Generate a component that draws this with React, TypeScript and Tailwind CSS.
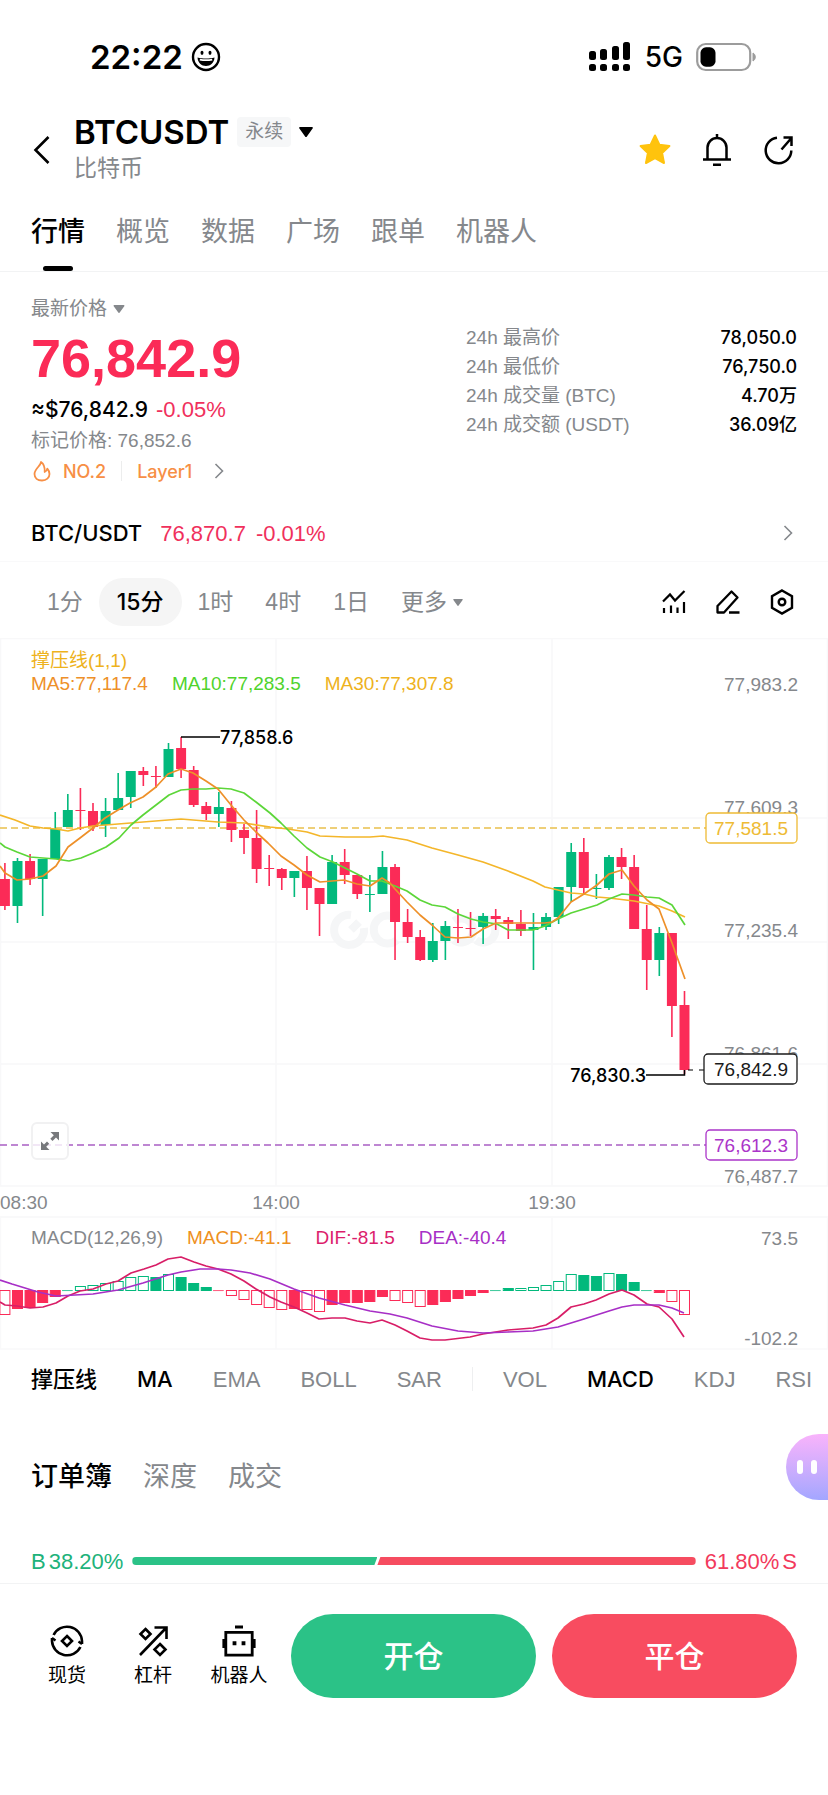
import React, { useState } from 'react';

const UP = '#02b97c';
const DOWN = '#fb2b57';
const PITCH = 12.585;
const FIRST_X = 4.9;

// [rising, high, body top, body bottom, low]
const candles: number[][] = [
  [0, 225, 241, 268, 272], [1, 220, 223, 268, 285], [0, 216, 223, 241, 247], [1, 221, 221, 241, 278],
  [1, 174, 191, 221, 221], [1, 156, 172, 189, 189], [0, 150, 172, 173, 192], [0, 165, 173, 189, 193],
  [1, 160, 173, 187, 199], [1, 135, 160, 172, 172], [1, 133, 133, 159, 170], [0, 129, 133, 137, 148],
  [0, 128, 138, 139, 150], [1, 105, 111, 139, 139], [0, 99, 110, 131, 140], [0, 128, 132, 167, 169],
  [0, 164, 168, 176, 182], [1, 154, 169, 176, 189], [0, 163, 170, 192, 204], [0, 186, 192, 200, 216],
  [0, 172, 200, 231, 245], [0, 217, 230, 231, 248], [0, 230, 231, 240, 252], [1, 233, 233, 240, 259],
  [0, 218, 233, 250, 272], [0, 250, 250, 266, 298], [1, 217, 224, 266, 266], [0, 211, 224, 237, 246],
  [0, 237, 237, 256, 261], [1, 237, 256, 257, 274], [1, 213, 229, 256, 256], [0, 226, 229, 284, 322],
  [0, 271, 284, 299, 305], [0, 292, 299, 322, 323], [1, 285, 303, 322, 324], [1, 283, 288, 303, 322],
  [0, 271, 289, 290, 305], [0, 274, 290, 291, 298], [1, 275, 278, 289, 306], [0, 271, 278, 281, 292],
  [0, 279, 282, 286, 301], [0, 272, 286, 293, 298], [1, 275, 289, 292, 332], [1, 275, 279, 289, 292],
  [1, 249, 249, 279, 286], [1, 205, 214, 249, 264], [0, 200, 214, 250, 257], [1, 236, 250, 251, 261],
  [1, 217, 219, 250, 252], [0, 210, 219, 229, 241], [0, 217, 229, 291, 291], [0, 267, 291, 322, 352],
  [1, 289, 295, 322, 338], [0, 295, 295, 368, 399], [0, 353, 367, 432, 436],
];

const ma5 =
  '0,228 5,235 17,242 30,241 43,238 56,228 68,209 80,200 93,190 105,180 118,172 130,165 143,159 156,149 168,136 181,131 193,135 206,143 218,151 231,167 244,182 256,194 268,205 281,218 294,227 307,237 320,244 344,242 357,246 370,248 382,240 390,245 395,251 407,264 420,277 432,287 445,299 458,300 471,299 483,291 496,285 545,285 552,284 558,280 571,264 584,256 597,247 609,236 622,232 634,248 647,262 659,271 672,305 685,341';
const ma10 =
  '0,205 5,209 17,214 30,219 43,220 56,221 69,223 81,220 93,215 106,209 119,200 131,187 143,177 156,167 169,157 181,152 193,151 206,151 218,150 231,151 244,155 256,164 270,175 281,185 294,198 307,210 320,219 333,224 357,236 370,243 382,243 395,248 407,253 420,262 432,267 445,269 458,276 471,281 483,284 497,286 508,292 533,292 545,288 558,281 571,275 584,271 597,267 609,261 622,256 634,257 647,259 659,260 672,267 685,287';
const ma30 =
  '0,177 15,182 30,188 43,190 56,191 68,193 80,190 93,188 118,186 143,184 168,182 181,181 193,182 218,184 244,185 270,189 288,191 307,194 320,198 345,199 370,199 383,198 407,202 432,210 458,217 483,224 508,233 533,243 545,249 558,252 571,255 584,256 597,259 609,260 634,263 659,268 672,273 685,279';

// [rising, filled, height]
const macdBars: number[][] = [
  [0, 0, 24], [0, 1, 18], [0, 1, 17], [0, 1, 12], [0, 1, 6], [1, 1, 0], [1, 0, 4], [1, 0, 5],
  [1, 0, 7], [1, 0, 9], [1, 0, 13], [1, 0, 14], [1, 1, 13], [1, 0, 16], [1, 1, 13], [1, 1, 7],
  [1, 1, 3], [0, 1, 0], [0, 0, 5], [0, 0, 9], [0, 0, 14], [0, 0, 17], [0, 0, 19], [0, 1, 18],
  [0, 0, 19], [0, 0, 21], [0, 1, 14], [0, 1, 12], [0, 1, 12], [0, 1, 11], [0, 1, 6], [0, 0, 10],
  [0, 0, 12], [0, 0, 16], [0, 1, 14], [0, 1, 11], [0, 1, 8], [0, 1, 5], [0, 1, 2], [1, 1, 0],
  [1, 1, 2], [1, 0, 2], [1, 0, 3], [1, 0, 5], [1, 0, 9], [1, 0, 16], [1, 1, 15], [1, 1, 14],
  [1, 0, 17], [1, 1, 16], [1, 1, 8], [1, 1, 0], [0, 1, 2], [0, 0, 11], [0, 0, 24],
];

const dif =
  '0,84 5,87 17,88 30,90 43,89 56,85 68,78 80,73 93,71 106,66 118,63 131,55 144,51 156,47 168,41 181,39 194,44 206,48 218,51 231,56 244,63 256,71 270,79 281,84 294,89 307,95 319,101 332,100 345,100 357,103 370,105 382,102 395,107 407,113 420,120 432,122 445,122 470,119 483,116 508,112 533,110 546,107 558,100 571,89 584,86 596,82 609,76 622,72 634,77 647,86 659,89 672,101 684,119';
const dea =
  '0,62 12,66 38,74 56,78 75,77 93,76 118,72 143,65 168,57 181,54 200,51 218,51 231,52 250,55 270,61 294,71 319,80 345,87 370,93 390,96 407,100 432,108 458,113 483,115 508,114 533,113 558,109 584,101 609,93 622,89 634,87 647,87 659,87 672,90 684,95';

const Caret = ({ className }: { className: string }) => (
  <svg viewBox="0 0 14 10" className={className} fill="currentColor">
    <path d="M1.2 0h11.6c.9 0 1.4.9.8 1.6L7.9 9.4a1.1 1.1 0 0 1-1.8 0L.4 1.6C-.2.9.3 0 1.2 0Z" />
  </svg>
);

const ChevronRight = () => (
  <svg viewBox="0 0 10 16" className="h-4 w-[10px] text-[#85888c]" fill="none" stroke="currentColor" strokeWidth="1.6">
    <path d="M1.5 1l7 7-7 7" />
  </svg>
);

const StatusBar = () => (
  <div className="flex h-[76px] items-center justify-between pt-[38px] pr-[72px] pl-[90px] font-['Inter',sans-serif]">
    <div className="flex items-center gap-2">
      <span className="text-[33px] leading-10 font-semibold">22:22</span>
      <svg viewBox="0 0 30 30" className="h-[30px] w-[30px]" fill="none" stroke="currentColor">
        <circle cx="15" cy="15" r="13" strokeWidth="2.4" />
        <ellipse cx="11" cy="10.8" rx="1.5" ry="2.1" fill="currentColor" stroke="none" />
        <ellipse cx="19" cy="10.8" rx="1.5" ry="2.1" fill="currentColor" stroke="none" />
        <path d="M6.5 15.5c5 1.3 12 1.3 17 0-.3 5.3-4 8.5-8.5 8.5s-8.2-3.2-8.5-8.5Z" fill="currentColor" stroke="none" />
        <path d="M8.8 17.6c4 .8 8.4.8 12.4 0" stroke="#fff" strokeWidth="1.7" />
      </svg>
    </div>
    <div className="flex items-center gap-[13px]">
      <svg viewBox="0 0 44 30" className="h-[30px] w-11" fill="currentColor">
        <rect x="1" y="9" width="7" height="9" rx="2.5" />
        <rect x="12" y="7" width="7" height="11" rx="2.5" />
        <rect x="24" y="4" width="7" height="14" rx="2.5" />
        <rect x="35" y="0" width="7" height="18" rx="2.5" />
        <rect x="1" y="22" width="7" height="7" rx="2.5" />
        <rect x="12" y="22" width="7" height="7" rx="2.5" />
        <rect x="24" y="22" width="7" height="7" rx="2.5" />
        <rect x="35" y="22" width="7" height="7" rx="2.5" />
      </svg>
      <span className="text-[28px] leading-10 font-medium">5G</span>
      <svg viewBox="0 0 60 30" className="h-[30px] w-[60px]">
        <rect x="1.2" y="2" width="53" height="26" rx="8.5" fill="none" stroke="#9c9c9c" strokeWidth="2.2" />
        <rect x="4.5" y="5.3" width="15" height="19.4" rx="5.5" />
        <path d="M57 11c3 1.5 3 6.5 0 8Z" fill="#9c9c9c" stroke="#9c9c9c" />
      </svg>
    </div>
  </div>
);

const Header = () => (
  <header className="flex items-center px-8 pt-9">
    <button aria-label="返回" className="flex w-[42px] pt-1">
      <svg viewBox="0 0 18 30" className="h-[30px] w-[18px]" fill="none" stroke="currentColor" strokeWidth="2.6">
        <path d="M16.5 2 3.5 15l13 13" />
      </svg>
    </button>
    <div className="flex-1">
      <div className="flex h-10 items-center">
        <h1 className="font-['Inter',sans-serif] text-[33px] leading-10 font-semibold">BTCUSDT</h1>
        <span className="ml-2 rounded-sm bg-[#f6f7f8] px-2 text-[19px] leading-[30px] text-[#85888c]">永续</span>
        <button aria-label="切换合约" className="ml-2">
          <Caret className="h-[10px] w-[14px]" />
        </button>
      </div>
      <p className="text-[23px] leading-8 text-[#85888c]">比特币</p>
    </div>
    <div className="flex items-center gap-7 pt-1">
      <button aria-label="收藏">
        <svg viewBox="0 0 34 34" className="h-[34px] w-[34px]" fill="#ffc30d" stroke="#ffc30d" strokeWidth="2" strokeLinejoin="round">
          <path d="M17 2.5l4.4 9.2 10 1.3-7.3 7 1.9 10L17 25.2 8 30l1.9-10-7.3-7 10-1.3Z" />
        </svg>
      </button>
      <button aria-label="提醒">
        <svg viewBox="0 0 34 34" className="h-[34px] w-[34px]" fill="none" stroke="currentColor" strokeWidth="2.5">
          <path d="M17 1v4M7.5 26.5V14.5a9.5 9.5 0 0 1 19 0v12M3 26.5h28M13 31.7h8" />
        </svg>
      </button>
      <button aria-label="分享">
        <svg viewBox="0 0 34 34" className="h-[34px] w-[34px]" fill="none" stroke="currentColor" strokeWidth="2.5">
          <path d="M15 4.7A12.8 12.8 0 1 0 29.3 17.5M19.5 16.5 29 5.5M21.5 4.5H29.5V13" />
        </svg>
      </button>
    </div>
  </header>
);

const pageTabs = ['行情', '概览', '数据', '广场', '跟单', '机器人'];

const PageTabs = () => {
  const [active, setActive] = useState('行情');
  return (
    <nav className="flex gap-[31px] border-b border-[#f2f3f4] px-[31px] pt-8">
      {pageTabs.map(tab => (
        <button
          key={tab}
          onClick={() => setActive(tab)}
          className={`flex flex-col items-center text-[27px] leading-8 ${active === tab ? 'font-medium text-black' : 'text-[#85888c]'}`}
        >
          {tab}
          <span className={`mt-[18px] h-[5px] w-[30px] rounded-sm ${active === tab ? 'bg-black' : ''}`} />
        </button>
      ))}
    </nav>
  );
};

const stats = [
  ['24h 最高价', '78,050.0'],
  ['24h 最低价', '76,750.0'],
  ['24h 成交量 (BTC)', '4.70万'],
  ['24h 成交额 (USDT)', '36.09亿'],
];

const Summary = () => (
  <section className="border-b border-[#f9f9fa] px-[31px] pt-[21px] pb-2">
    <div className="flex justify-between">
      <div>
        <button className="flex items-center gap-[6px] text-[19px] leading-8 text-[#85888c]">
          最新价格
          <Caret className="h-2 w-3" />
        </button>
        <p className="text-[54px] leading-[66px] font-bold text-[#fb2b57]">76,842.9</p>
        <p className="flex gap-2 text-[22px] leading-[38px] text-[#f0305c]">
          <span className="font-['Inter',sans-serif] text-[21px] font-medium text-black">≈$76,842.9</span>
          -0.05%
        </p>
        <p className="text-[19px] leading-6 text-[#85888c]">标记价格: 76,852.6</p>
        <a href="#rank" className="flex h-9 items-center font-['Inter',sans-serif] text-[18px] font-medium text-[#f78f45]">
          <svg viewBox="0 0 20 22" className="ml-px h-[22px] w-5" fill="none" stroke="currentColor" strokeWidth="1.8" strokeLinejoin="round">
            <path d="M9 2c.3 3.5-6.5 6.5-6.5 12 0 4 3 6.5 7.5 6.5s7.5-2.8 7.5-6.5c0-2-.8-3.8-2.2-5.3-.3 1.800-1.200 2.800-2.600 3.300C13 7.500 12 4 9 2Z" />
          </svg>
          <span className="ml-[11px]">NO.2</span>
          <span className="mx-[15px] h-5 w-px bg-[#eceded]" />
          <span>Layer1</span>
          <span className="ml-[22px]"><ChevronRight /></span>
        </a>
      </div>
      <dl className="mt-[30px] w-[331px] text-[19px] leading-[29px]">
        {stats.map(([label, value]) => (
          <div key={label} className="flex justify-between">
            <dt className="text-[#85888c]">{label}</dt>
            <dd className="font-['Inter','Noto_Sans_CJK_SC',sans-serif] text-[18px] font-medium">{value}</dd>
          </div>
        ))}
      </dl>
    </div>
    <a href="#spot" className="mt-6 flex h-10 items-center pr-1 text-[22px] text-[#f0305c]">
      <span className="font-['Inter',sans-serif] font-medium text-black">BTC/USDT</span>
      <span className="ml-[18px]">76,870.7</span>
      <span className="ml-[10px] flex-1">-0.01%</span>
      <ChevronRight />
    </a>
  </section>
);

const intervals = ['1分', '15分', '1时', '4时', '1日'];

const IntervalBar = () => {
  const [active, setActive] = useState('15分');
  return (
    <div className="flex items-center justify-between px-[31px] pt-4 pb-3 text-[23px]">
      <div className="flex items-center text-[#85888c]">
        {intervals.map(item => (
          <button
            key={item}
            onClick={() => setActive(item)}
            className={`h-12 rounded-full ${active === item ? "bg-[#f5f5f5] px-[18px] font-['Inter','Noto_Sans_CJK_SC',sans-serif] font-medium text-black" : 'px-4'}`}
          >
            {item}
          </button>
        ))}
        <button className="flex h-12 items-center gap-[6px] px-4">
          更多
          <Caret className="h-[7px] w-[10px]" />
        </button>
      </div>
      <div className="flex items-center gap-7 pr-[2px]">
        <button aria-label="指标">
          <svg viewBox="0 0 26 26" className="h-[26px] w-[26px]" fill="none" stroke="currentColor" strokeWidth="2.2">
            <path d="M2 12.5 9 5.5l5 6L23.500 2M3 19v5M10 16.500V24M16.500 18.500V24M23 13v11" />
          </svg>
        </button>
        <button aria-label="画线">
          <svg viewBox="0 0 26 26" className="h-[26px] w-[26px]" fill="none" stroke="currentColor" strokeWidth="2.3" strokeLinejoin="round">
            <path d="M16.5 2.5l6 6L9 23.500H2.500V17ZM14 23.500h10.500" />
          </svg>
        </button>
        <button aria-label="设置">
          <svg viewBox="0 0 26 26" className="h-[26px] w-[26px]" fill="none" stroke="currentColor" strokeWidth="2.4">
            <path d="M13 1.5 23 7.3v11.4L13 24.500 3 18.700V7.300Z" />
            <circle cx="13" cy="13" r="3.3" />
          </svg>
        </button>
      </div>
    </div>
  );
};

const priceLabels: [string, number][] = [
  ['77,983.2', 46],
  ['77,609.3', 169],
  ['77,235.4', 292],
  ['76,861.6', 415],
  ['76,487.7', 538],
];

const PriceTag = ({ x, y, color, children }: { x: number; y: number; color: string; children: string }) => (
  <g>
    <rect x={x} y={y - 15} width={797 - x} height="30" rx="4" fill="#fff" stroke={color} strokeWidth="1.3" />
    <text x="788" y={y + 7} textAnchor="end" fill={color}>{children}</text>
  </g>
);

const PriceChart = () => (
  <div className="relative">
    <svg viewBox="0 0 828 580" className="block w-full" fontSize="19">
      <g stroke="#f8f8f9" strokeWidth="1.5">
        <path d="M0 .5H828M0 180H828M0 304H828M0 426H828M0 548H828M0 579H828" />
        <path d="M.5 0V548M276 0V548M552 0V548M827.5 0V548" />
      </g>
      <g fill="none" stroke="#f5f6f7" strokeWidth="8">
        <path d="M351 277a15 15 0 1 0 13 13M351 292l8-8M397 281a14 14 0 1 0 0 21" />
        <path d="M454 302a12 12 0 1 0 0-19M476 302a12 12 0 1 0 0-19" />
      </g>
      <path d="M0 190H706" stroke="#e9c04c" strokeWidth="1.3" strokeDasharray="7 4" />
      <path d="M0 507H706" stroke="#a95fc4" strokeWidth="1.3" strokeDasharray="7 4" />
      {candles.map(([rising, high, top, bottom, low], i) => {
        const x = FIRST_X + i * PITCH;
        const color = rising ? UP : DOWN;
        return (
          <g key={i} fill={color}>
            <rect x={x - 0.8} y={high} width="1.6" height={low - high} />
            <rect x={x - 5} y={top} width="10" height={bottom - top} />
          </g>
        );
      })}
      <g fill="none" strokeWidth="1.7" strokeLinejoin="round">
        <polyline points={ma30} stroke="#f4b62a" />
        <polyline points={ma10} stroke="#5cd639" />
        <polyline points={ma5} stroke="#ee9029" />
      </g>
      <g fill="none" stroke="#000" strokeWidth="1.5">
        <path d="M181 99H220M646 437H684.5V432" />
        <path d="M688 432H704" strokeWidth="1.2" strokeDasharray="5 6" />
      </g>
      <g className="font-['Inter',sans-serif] text-[18px] font-medium">
        <text x="220" y="106">77,858.6</text>
        <text x="646" y="444" textAnchor="end">76,830.3</text>
      </g>
      <g fill="#85888c" textAnchor="end">
        {priceLabels.map(([text, y]) => (
          <text key={text} x="798" y={y + 7}>{text}</text>
        ))}
      </g>
      <PriceTag x={706} y={190} color="#eebb35">77,581.5</PriceTag>
      <PriceTag x={704} y={431} color="#1a1a1a">76,842.9</PriceTag>
      <PriceTag x={706} y={507} color="#ab35c9">76,612.3</PriceTag>
      <g fill="#85888c">
        <text x="0" y="571">08:30</text>
        <text x="276" y="571" textAnchor="middle">14:00</text>
        <text x="552" y="571" textAnchor="middle">19:30</text>
      </g>
    </svg>
    <div className="absolute top-[11px] left-[31px] text-[19px] leading-[23px] text-[#eeb21c]">
      <p>撑压线(1,1)</p>
      <p className="flex gap-6">
        <span className="text-[#ee9029]">MA5:77,117.4</span>
        <span className="text-[#4fd32c]">MA10:77,283.5</span>
        <span>MA30:77,307.8</span>
      </p>
    </div>
    <button
      aria-label="全屏"
      className="absolute bottom-[58px] left-[31px] flex h-[38px] w-[38px] items-center justify-center rounded-md border-2 border-[#f1f1f2] bg-white/80 text-[#77797c]"
    >
      <svg viewBox="0 0 20 20" className="h-5 w-5" fill="currentColor">
        <path d="M10.500 1H19v8.500l-3-3-3.500 3.500-2.200-2.200L13.800 4.300ZM9.500 19H1v-8.500l3 3L7 10.500l2.200 2.200-3 3Z" />
      </svg>
    </button>
  </div>
);

const MacdChart = () => (
  <div className="relative">
    <svg viewBox="0 0 828 132" className="block w-full" fontSize="19">
      <path d="M.5 0V131M276 0V131M552 0V131M827.5 0V131M0 131H828" stroke="#f9f9fa" strokeWidth="1.5" />
      {macdBars.map(([rising, filled, height], i) => {
        const color = rising ? UP : DOWN;
        const y = rising ? 72.5 - height : 72.5;
        return (
          <rect
            key={i}
            x={FIRST_X + i * PITCH - 5}
            y={y}
            width="10"
            height={Math.max(height, 0.4)}
            fill={filled ? color : '#fff'}
            stroke={color}
            strokeWidth={height ? 1 : 0.3}
          />
        );
      })}
      <g fill="none" strokeWidth="1.7" strokeLinejoin="round">
        <polyline points={dif} stroke="#d81e67" />
        <polyline points={dea} stroke="#a72fc6" />
      </g>
      <g fill="#85888c" textAnchor="end">
        <text x="798" y="27">73.5</text>
        <text x="798" y="127">-102.2</text>
      </g>
    </svg>
    <p className="absolute top-2 left-[31px] flex gap-6 text-[19px] leading-6">
      <span className="text-[#85888c]">MACD(12,26,9)</span>
      <span className="text-[#ee9020]">MACD:-41.1</span>
      <span className="text-[#dc1e6c]">DIF:-81.5</span>
      <span className="text-[#a72fc6]">DEA:-40.4</span>
    </p>
  </div>
);

const mainIndicators = ['撑压线', 'MA', 'EMA', 'BOLL', 'SAR'];
const subIndicators = ['VOL', 'MACD', 'KDJ', 'RSI'];

const IndicatorTabs = () => {
  const [selected, setSelected] = useState(['撑压线', 'MA', 'MACD']);
  const toggle = (name: string) =>
    setSelected(selected.includes(name) ? selected.filter(n => n !== name) : [...selected, name]);

  const renderItem = (name: string) => (
    <button
      key={name}
      onClick={() => toggle(name)}
      className={`shrink-0 ${selected.includes(name) ? "font-['Inter','Noto_Sans_CJK_SC',sans-serif] font-medium text-black" : 'text-[#85888c]'}`}
    >
      {name}
    </button>
  );

  return (
    <div className="flex h-[58px] items-center gap-10 overflow-hidden pl-[31px] text-[22px]">
      {mainIndicators.map(renderItem)}
      <div className="flex shrink-0 items-center gap-[30px]">
        <span className="-ml-[10px] h-6 w-px bg-[#eeeff0]" />
        {renderItem('VOL')}
      </div>
      {subIndicators.slice(1).map(renderItem)}
    </div>
  );
};

const OrderBook = () => {
  const [active, setActive] = useState('订单簿');
  return (
    <section className="relative border-b border-[#f2f3f4] pt-[53px]">
      <div className="flex gap-[31px] px-[31px] text-[27px] leading-8">
        {['订单簿', '深度', '成交'].map(tab => (
          <button
            key={tab}
            onClick={() => setActive(tab)}
            className={active === tab ? 'font-medium text-black' : 'text-[#85888c]'}
          >
            {tab}
          </button>
        ))}
      </div>
      <button
        aria-label="智能助手"
        className="absolute top-[26px] right-0 flex h-[66px] w-[42px] items-center justify-center gap-2 rounded-l-full bg-linear-to-b from-[#f9b3fb] to-[#a3a6ff]"
      >
        <span className="h-[14px] w-[6px] rounded-full bg-white" />
        <span className="h-[14px] w-[6px] rounded-full bg-white" />
      </button>
      <div className="mt-12 flex h-[42px] items-center gap-[9px] px-[31px] pb-[2px] text-[22px]">
        <span className="flex gap-[3px] text-[#20b27a]"><span>B</span><span>38.20%</span></span>
        <div className="flex h-2 flex-1">
          <span className="w-[43.5%] rounded-l-full bg-[#2bc287] [clip-path:polygon(0_0,100%_0,calc(100%-3px)_100%,0_100%)]" />
          <span className="flex-1 rounded-r-full bg-[#f64c60] [clip-path:polygon(3px_0,100%_0,100%_100%,0_100%)]" />
        </div>
        <span className="flex gap-[3px] text-[#f23a5c]"><span>61.80%</span><span>S</span></span>
      </div>
    </section>
  );
};

const SpotIcon = () => (
  <svg viewBox="0 0 36 36" className="h-9 w-9" fill="none" stroke="currentColor" strokeWidth="2.6">
    <path d="M4.600 12A15 15 0 0 1 33 18v3M31.400 24A15 15 0 0 1 3 18v-3" />
    <path d="M29.500 18.500l3.500 2.500M6.500 17.500 3 15" strokeWidth="2.4" />
    <path d="M18 13l5 5-5 5-5-5Z" />
  </svg>
);

const LeverageIcon = () => (
  <svg viewBox="0 0 36 36" className="h-9 w-9" fill="none" stroke="currentColor" strokeWidth="2.6">
    <path d="M5 32 31 5M19.500 4.500H31.500V16M10.500 6l5 5-5 5-5-5ZM25 21l5.500 5.500L25 32l-5.500-5.500Z" />
  </svg>
);

const BotIcon = () => (
  <svg viewBox="0 0 36 36" className="h-9 w-9" fill="none" stroke="currentColor" strokeWidth="2.8">
    <path d="M4.800 9.400h26.400v22.800H4.800ZM14 4h8M2.800 16v9M33.200 16v9" />
    <path d="M13.500 18.200v4M22.500 18.200v4" strokeWidth="3.8" />
  </svg>
);

const shortcuts = [
  { label: '现货', icon: <SpotIcon /> },
  { label: '杠杆', icon: <LeverageIcon /> },
  { label: '机器人', icon: <BotIcon /> },
];

const BottomBar = () => (
  <footer className="flex items-center pt-[30px] pr-[31px] pb-24 pl-6">
    {shortcuts.map(({ label, icon }) => (
      <button key={label} className="flex w-[86px] shrink-0 flex-col items-center pt-1 text-[19px] leading-[34px]">
        {icon}
        {label}
      </button>
    ))}
    <div className="ml-[9px] grid flex-1 grid-cols-2 gap-4 text-[30px] font-medium text-white">
      <button className="h-[84px] rounded-full bg-[#2bc287]">开仓</button>
      <button className="h-[84px] rounded-full bg-[#f84c60]">平仓</button>
    </div>
  </footer>
);

const App: React.FC = () => {
  return (
    <div className="min-h-screen bg-white font-['Liberation_Sans','Noto_Sans_CJK_SC',sans-serif] text-black">
      <StatusBar />
      <Header />
      <PageTabs />
      <Summary />
      <IntervalBar />
      <PriceChart />
      <MacdChart />
      <IndicatorTabs />
      <OrderBook />
      <BottomBar />
    </div>
  );
};

export default App;
